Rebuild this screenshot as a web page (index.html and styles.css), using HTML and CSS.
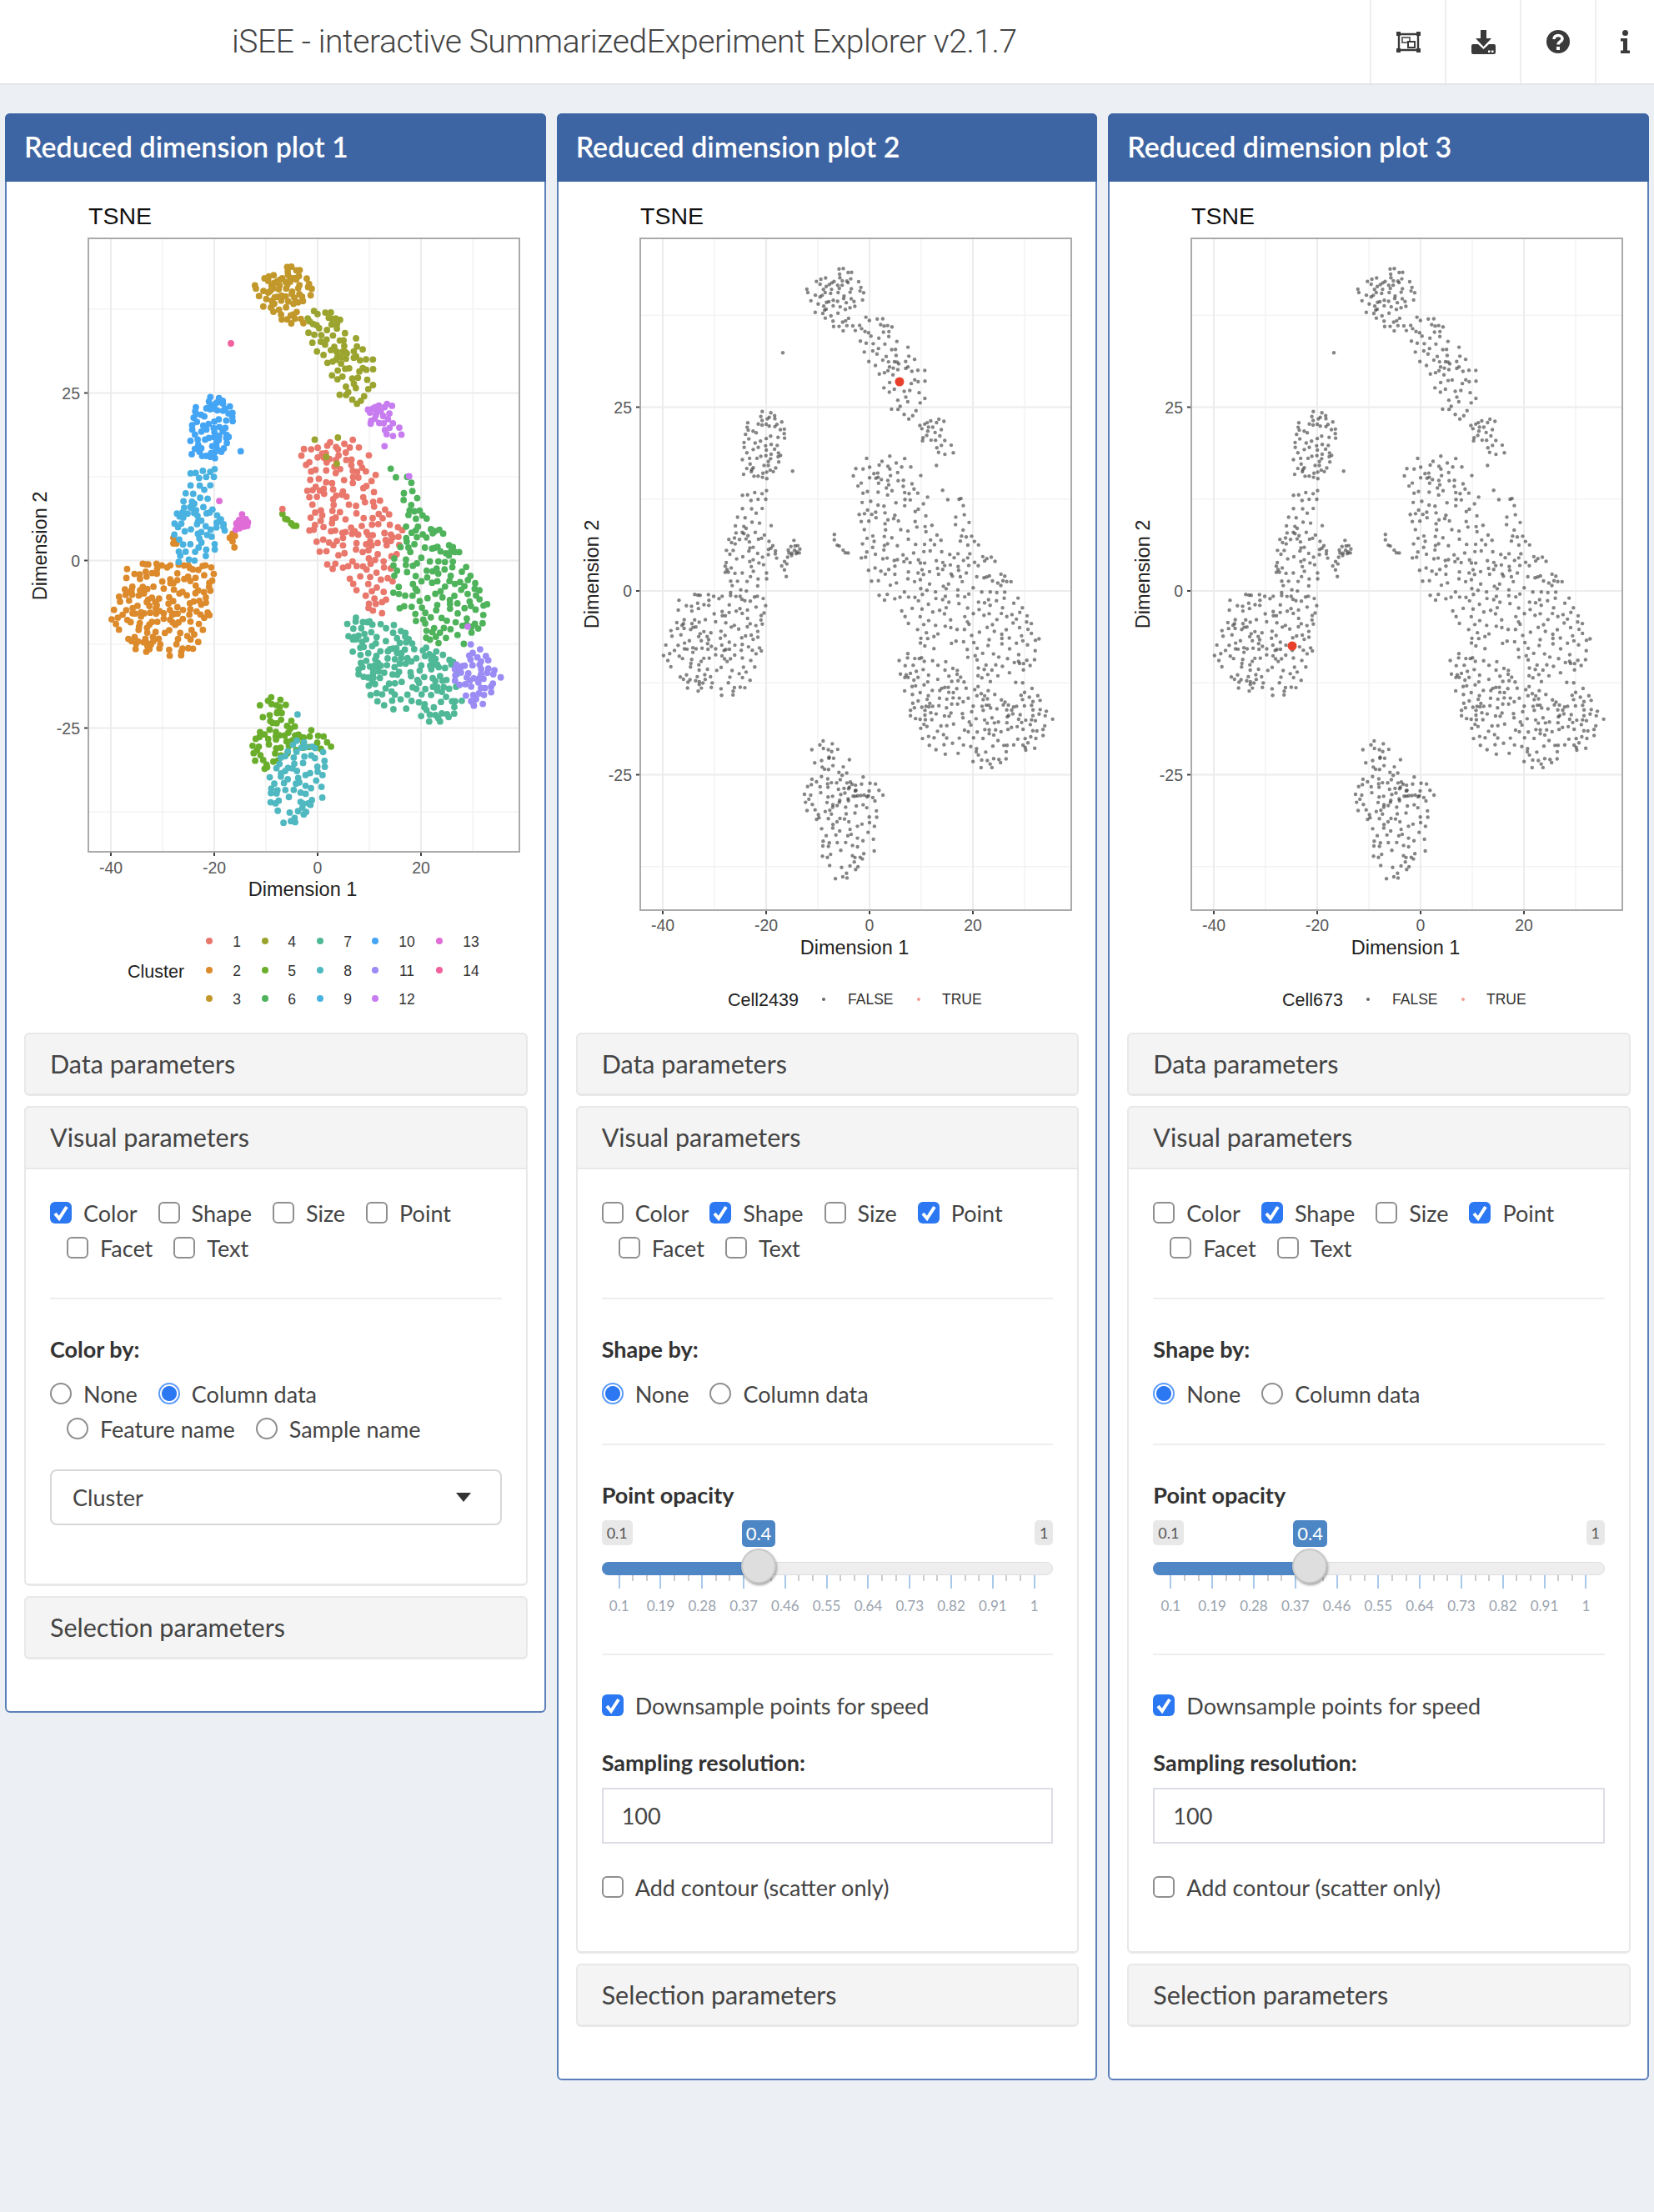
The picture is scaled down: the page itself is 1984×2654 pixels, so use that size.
FILE: index.html
```html
<!DOCTYPE html>
<html lang="en">
<head>
    <meta charset="UTF-8">
    <title>iSEE</title>
    <link rel="stylesheet" href="styles.css">
</head>
<body>
    <header class="topbar">
        <div class="app-title">iSEE - interactive SummarizedExperiment Explorer v2.1.7</div>
        <div class="top-cell">
            <svg class="ic-group" viewBox="0 0 29 25">
                <path fill="none" stroke="#3a3a3a" stroke-width="2.4" d="M3 3h23v19H3z"/>
                <path fill="#3a3a3a" d="M0 0h5v5H0zM24 0h5v5h-5zM0 20h5v5H0zM24 20h5v5h-5z"/>
                <path fill="#3a3a3a" fill-opacity=".75" d="M6 6h11v8H6z"/>
                <path fill="#fff" d="M8 8h7v4H8z"/>
                <path fill="#3a3a3a" d="M13 11h10v9H13z"/>
                <path fill="#fff" d="M15 13h6v5h-6z"/>
            </svg>
        </div>
        <div class="top-cell">
            <svg class="ic-download" viewBox="0 0 29 29">
                <path fill="#3a3a3a" d="M11 0h7v10h6l-9.500 10L5 10h6z"/>
                <path fill="#3a3a3a" d="M0 19a2 2 0 0 1 2-2h6l6.500 6 6.500-6h6a2 2 0 0 1 2 2v8a2 2 0 0 1-2 2H2a2 2 0 0 1-2-2z"/>
                <path fill="#fff" d="M20 24.500h2.500V27H20zM24 24.500h2.500V27H24z"/>
            </svg>
        </div>
        <div class="top-cell">
            <svg class="ic-help" viewBox="0 0 28 28">
                <circle cx="14" cy="14" r="14" fill="#3a3a3a"/>
                <path fill="none" stroke="#fff" stroke-width="3.600" d="M9 11c0-3 2.200-4.500 5-4.500s5 1.700 5 4c0 3.500-5 3.500-5 7"/>
                <path fill="#fff" d="M12 20h4v4h-4z"/>
            </svg>
        </div>
        <div class="top-cell top-cell-last">
            <svg class="ic-info" viewBox="0 0 11 28">
                <circle cx="5.500" cy="3.500" r="3.500" fill="#3a3a3a"/>
                <path fill="#3a3a3a" d="M0 10h8v14.500h3V28H0v-3.500h3v-11H0z"/>
            </svg>
        </div>
    </header>

    <main class="panels">
        <!-- plot 1 -->
        <section class="box">
            <div class="box-title">Reduced dimension plot 1</div>
            <div class="box-body">
                <svg class="plot" data-plot="1" viewBox="2 218 644 1021"></svg>
                <div class="coll">Data parameters</div>
                <div class="coll-open">
                    <div class="coll coll-head">Visual parameters</div>
                    <div class="coll-body">
                        <div class="opt-row">
                            <label class="opt"><input type="checkbox" checked>Color</label>
                            <label class="opt"><input type="checkbox">Shape</label>
                            <label class="opt"><input type="checkbox">Size</label>
                            <label class="opt"><input type="checkbox">Point</label>
                        </div>
                        <div class="opt-row opt-row-wrap">
                            <label class="opt"><input type="checkbox">Facet</label>
                            <label class="opt"><input type="checkbox">Text</label>
                        </div>
                        <hr class="sep">
                        <div class="field-label">Color by:</div>
                        <div class="opt-row">
                            <label class="opt"><input type="radio" name="c1">None</label>
                            <label class="opt"><input type="radio" name="c1" checked>Column data</label>
                        </div>
                        <div class="opt-row opt-row-wrap">
                            <label class="opt"><input type="radio" name="c1">Feature name</label>
                            <label class="opt"><input type="radio" name="c1">Sample name</label>
                        </div>
                        <div class="select-box">Cluster<span class="caret"></span></div>
                    </div>
                </div>
                <div class="coll">Selection parameters</div>
            </div>
        </section>

        <!-- plot 2 -->
        <section class="box">
            <div class="box-title">Reduced dimension plot 2</div>
            <div class="box-body">
                <svg class="plot" data-plot="2" viewBox="2 218 644 1021"></svg>
                <div class="coll">Data parameters</div>
                <div class="coll-open">
                    <div class="coll coll-head">Visual parameters</div>
                    <div class="coll-body coll-body-long">
                        <div class="opt-row">
                            <label class="opt"><input type="checkbox">Color</label>
                            <label class="opt"><input type="checkbox" checked>Shape</label>
                            <label class="opt"><input type="checkbox">Size</label>
                            <label class="opt"><input type="checkbox" checked>Point</label>
                        </div>
                        <div class="opt-row opt-row-wrap">
                            <label class="opt"><input type="checkbox">Facet</label>
                            <label class="opt"><input type="checkbox">Text</label>
                        </div>
                        <hr class="sep">
                        <div class="field-label">Shape by:</div>
                        <div class="opt-row">
                            <label class="opt"><input type="radio" name="s2" checked>None</label>
                            <label class="opt"><input type="radio" name="s2">Column data</label>
                        </div>
                        <hr class="sep sep-b">
                        <div class="field-label">Point opacity</div>
                        <div class="slider"></div>
                        <hr class="sep sep-c">
                        <div class="opt-row"><label class="opt"><input type="checkbox" checked>Downsample points for speed</label></div>
                        <div class="field-label field-label-res">Sampling resolution:</div>
                        <input class="num-input" type="text" value="100">
                        <div class="opt-row opt-row-last"><label class="opt"><input type="checkbox">Add contour (scatter only)</label></div>
                    </div>
                </div>
                <div class="coll">Selection parameters</div>
            </div>
        </section>

        <!-- plot 3 -->
        <section class="box">
            <div class="box-title">Reduced dimension plot 3</div>
            <div class="box-body">
                <svg class="plot" data-plot="3" viewBox="2 218 644 1021"></svg>
                <div class="coll">Data parameters</div>
                <div class="coll-open">
                    <div class="coll coll-head">Visual parameters</div>
                    <div class="coll-body coll-body-long">
                        <div class="opt-row">
                            <label class="opt"><input type="checkbox">Color</label>
                            <label class="opt"><input type="checkbox" checked>Shape</label>
                            <label class="opt"><input type="checkbox">Size</label>
                            <label class="opt"><input type="checkbox" checked>Point</label>
                        </div>
                        <div class="opt-row opt-row-wrap">
                            <label class="opt"><input type="checkbox">Facet</label>
                            <label class="opt"><input type="checkbox">Text</label>
                        </div>
                        <hr class="sep">
                        <div class="field-label">Shape by:</div>
                        <div class="opt-row">
                            <label class="opt"><input type="radio" name="s3" checked>None</label>
                            <label class="opt"><input type="radio" name="s3">Column data</label>
                        </div>
                        <hr class="sep sep-b">
                        <div class="field-label">Point opacity</div>
                        <div class="slider"></div>
                        <hr class="sep sep-c">
                        <div class="opt-row"><label class="opt"><input type="checkbox" checked>Downsample points for speed</label></div>
                        <div class="field-label field-label-res">Sampling resolution:</div>
                        <input class="num-input" type="text" value="100">
                        <div class="opt-row opt-row-last"><label class="opt"><input type="checkbox">Add contour (scatter only)</label></div>
                    </div>
                </div>
                <div class="coll">Selection parameters</div>
            </div>
        </section>
    </main>
    <script src="plots.js"></script>
</body>
</html>
```

FILE: styles.css
```css
* {
    box-sizing: border-box;
}
body {
    margin: 0;
    min-height: 2654px;
    background-color: #ecf0f5;
    font-family: Lato, "Noto Sans", sans-serif;
    color: #444;
}
.topbar {
    display: flex;
    height: 102px;
    background-color: #fff;
    border-bottom: 2px solid #e2e5ea;
}
.app-title {
    flex: 1;
    padding-left: 278px;
    font-family: Roboto, "Liberation Sans", sans-serif;
    font-weight: 300;
    font-size: 39px;
    letter-spacing: -.4px;
    line-height: 100px;
    color: #444;
}
.top-cell {
    display: flex;
    align-items: center;
    justify-content: center;
    width: 90px;
    border-left: 2px solid #eee;
}
.top-cell-last {
    width: 71px;
}
.ic-group {
    width: 29px;
    height: 25px;
}
.ic-download {
    width: 29px;
    height: 29px;
}
.ic-help {
    width: 28px;
    height: 28px;
}
.ic-info {
    width: 11px;
    height: 28px;
}
.panels {
    display: grid;
    grid-template-columns: repeat(3, minmax(0, 1fr));
    gap: 13px;
    align-items: start;
    padding: 34px 6px 0;
}
.box {
    background-color: #fff;
    border: 2px solid #5b7fb8;
    border-radius: 6px;
}
.box-title {
    height: 82px;
    margin: -2px -2px 0;
    padding-left: 23px;
    background-color: #3e65a3;
    border-radius: 6px 6px 0 0;
    color: #fff;
    font-size: 34px;
    font-weight: 600;
    line-height: 80px;
}
.box-body {
    padding: 0 20px 50px 21px;
}
.plot {
    display: block;
    width: 644px;
    height: 1021px;
    margin-left: -21px;
}
.plot text {
    font-family: "Liberation Sans", Arial, sans-serif;
}
.coll {
    height: 76px;
    margin-bottom: 12px;
    padding-left: 29px;
    background-color: #f4f4f4;
    border: 2px solid #e8e8e8;
    border-bottom-width: 3px;
    border-radius: 6px;
    font-size: 30.5px;
    line-height: 70px;
    color: #444;
}
.coll-open {
    margin-bottom: 12px;
    border: 2px solid #e8e8e8;
    border-bottom-width: 3px;
    border-radius: 6px;
}
.coll-head {
    margin: -2px -2px 0;
    border-radius: 6px 6px 0 0;
    border-bottom-width: 2px;
}
.coll-body {
    padding: 31px 29px 70px;
}
.coll-body-long {
    padding-bottom: 56px;
}
.opt-row {
    display: flex;
    gap: 25px;
    height: 42px;
}
.opt-row-wrap {
    padding-left: 20px;
}
.opt-row-last {
    margin-top: 31px;
}
.opt {
    display: flex;
    align-items: center;
    gap: 14px;
    font-size: 27px;
    color: #444;
}
.opt input {
    appearance: none;
    flex: none;
    width: 26px;
    height: 26px;
    margin: 0;
    background-color: #fff;
    border: 2px solid #8f8f8f;
}
.opt input[type="checkbox"] {
    border-radius: 6px;
}
.opt input[type="checkbox"]:checked {
    background: #2b78f2 url("data:image/svg+xml,%3Csvg xmlns='http://www.w3.org/2000/svg' viewBox='0 0 26 26'%3E%3Cpath fill='none' stroke='%23fff' stroke-width='4' d='M6 14l5 6 9-14'/%3E%3C/svg%3E") center / 100% no-repeat;
    border: none;
}
.opt input[type="radio"] {
    border-radius: 50%;
}
.opt input[type="radio"]:checked {
    background: radial-gradient(circle, #2b78f2 0 8.500px, #fff 9.500px);
    border-color: #5b9bf8;
}
.sep {
    height: 2px;
    margin: 39px 0 42px;
    background-color: #eee;
    border: none;
}
.sep-c {
    margin: 0 0 39px;
}
.field-label {
    height: 36px;
    margin-bottom: 14px;
    font-size: 27px;
    font-weight: 700;
    line-height: 36px;
    color: #333;
}
.field-label-res {
    margin: 30px 0 12px;
}
.select-box {
    position: relative;
    height: 67px;
    margin-top: 28px;
    padding-left: 25px;
    background-color: #fff;
    border: 2px solid #d8d8d8;
    border-radius: 8px;
    font-size: 27px;
    line-height: 64px;
    color: #444;
}
.caret {
    position: absolute;
    top: 26px;
    right: 35px;
    border-top: 11px solid #333;
    border-left: 9px solid transparent;
    border-right: 9px solid transparent;
}
.num-input {
    display: block;
    width: 100%;
    height: 67px;
    padding: 0 22px;
    background-color: #fff;
    border: 2px solid #dcdee6;
    font-family: inherit;
    font-size: 27px;
    color: #444;
}
.slider {
    position: relative;
    height: 160px;
    margin-top: -2px;
}
.slider-badge {
    position: absolute;
    top: 0;
    height: 30px;
    padding: 0 6px;
    background-color: #e8e8e8;
    border-radius: 5px;
    font-size: 18px;
    line-height: 30px;
    color: #555;
}
.slider-badge-on {
    top: 0;
    height: 32px;
    padding: 0 5px;
    background-color: #4c86c4;
    font-size: 22px;
    line-height: 32px;
    color: #fff;
}
.slider-track {
    position: absolute;
    top: 50px;
    left: 0;
    right: 0;
    height: 16px;
    background-color: #eee;
    border: 1px solid #ddd;
    border-radius: 8px;
}
.slider-fill {
    position: absolute;
    top: 50px;
    left: 0;
    height: 16px;
    background-color: #4f86c6;
    border-radius: 8px 0 0 8px;
}
.slider-handle {
    position: absolute;
    top: 34px;
    width: 42px;
    height: 42px;
    background-color: #dedede;
    border: 2px solid #c8c8c8;
    border-radius: 50%;
    box-shadow: 1px 2px 3px rgba(0, 0, 0, .35);
}
.tick {
    position: absolute;
    top: 66px;
    width: 2px;
    height: 16px;
    background-color: #a9c9ea;
}
.tick-minor {
    height: 7px;
    background-color: #ccc;
}
.tick-label {
    position: absolute;
    top: 93px;
    width: 60px;
    margin-left: -30px;
    text-align: center;
    font-size: 17px;
    line-height: 20px;
    color: #9aa3ae;
}
```

FILE: plots.js
```js
// seeded random so the three plots and every reload show the same cloud
var seed = 4242;
function rnd() {
    seed = (seed + 0x6D2B79F5) | 0;
    var t = Math.imul(seed ^ (seed >>> 15), 1 | seed);
    t = (t + Math.imul(t ^ (t >>> 7), 61 | t)) ^ t;
    return ((t ^ (t >>> 14)) >>> 0) / 4294967296;
}

var COLORS = {
    1: '#e9776c', 2: '#dc8a2b', 3: '#c2982b', 4: '#9aa42e', 5: '#6aae2c', 6: '#4fb35c', 7: '#4fb896',
    8: '#4fb8c0', 9: '#4ab2e0', 10: '#45a5f5', 11: '#9a8bf5', 12: '#c77df0', 13: '#e06cd8', 14: '#f2609e'
};

// cluster outlines traced off plot 1. "a" coords are page px, "b" coords are measured from
// a stretched crop, see toPage()
var CLUSTERS = [
    { c: 3, n: 72, a: [[304,340],[348,317],[375,333],[375,357],[357,367],[366,390],[353,393],[312,367]] },
    { c: 4, n: 78, a: [[366,377],[393,367],[451,430],[447,467],[429,487],[406,473],[393,437],[373,417]] },
    { c: 12, n: 26, a: [[432,491],[470,483],[482,522],[465,525],[440,505]] },
    { c: 1, n: 180, b: [[850,110],[990,60],[1060,120],[1085,250],[1120,350],[1150,385],[1150,440],[1115,480],[1135,580],[1090,670],[1030,650],[1030,600],[950,520],[910,470],[870,400],[880,300],[860,190]] },
    { c: 6, n: 150, b: [[1105,170],[1170,200],[1210,330],[1280,390],[1320,480],[1390,620],[1380,700],[1330,770],[1220,760],[1180,680],[1110,620],[1120,480],[1150,400],[1150,250]] },
    { c: 7, n: 165, b: [[985,700],[1020,670],[1130,700],[1200,770],[1300,810],[1310,890],[1330,960],[1290,1010],[1215,1040],[1180,980],[1090,985],[1030,900],[1000,780]] },
    { c: 11, n: 50, b: [[1335,750],[1370,780],[1430,870],[1390,960],[1350,995],[1320,930],[1280,860],[1310,810]] },
    { c: 2, n: 170, b: [[360,505],[420,490],[610,500],[610,560],[600,670],[560,770],[510,820],[460,790],[385,800],[340,730],[310,680],[335,610],[360,570]] },
    { c: 2, n: 4, b: [[490,405],[505,405],[505,435],[490,435]] },
    { c: 2, n: 5, b: [[652,385],[672,395],[672,445],[655,440]] },
    { c: 10, n: 70, b: [[610,-81],[670,-30],[655,80],[620,150],[550,150],[540,90],[545,20],[560,-50]] },
    { c: 9, n: 68, b: [[545,180],[620,170],[600,280],[620,360],[610,480],[540,490],[500,490],[495,350],[520,270]] },
    { c: 9, n: 6, b: [[610,330],[625,330],[655,385],[640,390]] },
    { c: 13, n: 14, b: [[690,325],[715,360],[680,390],[665,385],[675,350]] },
    { c: 5, n: 72, b: [[735,965],[785,930],[820,960],[830,1010],[855,1060],[890,1040],[960,1100],[940,1125],[885,1110],[810,1135],[760,1190],[720,1150],[715,1100],[750,1030]] },
    { c: 5, n: 6, b: [[790,325],[810,325],[850,370],[835,375]] },
    { c: 8, n: 72, b: [[850,1060],[900,1110],[955,1140],[935,1270],[890,1310],[850,1360],[810,1370],[770,1300],[765,1200],[810,1130]] }
];
var LONE = [
    { c: 14, a: [277, 412] }, { c: 10, b: [686, 116] }, { c: 13, b: [625, 283] }, { c: 4, b: [897, 77] },
    { c: 4, b: [930, 135] }, { c: 4, b: [960, 158] }, { c: 4, b: [963, 70] }, { c: 8, b: [848, 1000] },
    { c: 12, b: [1096, 99] }, { c: 12, b: [1166, 200] }, { c: 12, b: [1333, 705] }, { c: 1, b: [805, 310] }
];

function toPage(p) {
    return [p[0] / 2.376, 500 + p[1] / 2.8];
}
function inPoly(x, y, poly) {
    var inside = false;
    for (var i = 0, j = poly.length - 1; i < poly.length; j = i++) {
        var a = poly[i], b = poly[j];
        if ((a[1] > y) !== (b[1] > y) && x < (b[0] - a[0]) * (y - a[1]) / (b[1] - a[1]) + a[0]) inside = !inside;
    }
    return inside;
}
function toData(x, y) {
    return { x: (x - 381) / 6.2, y: (672.5 - y) / 8.04 };
}

var points = [];
CLUSTERS.forEach(function (cl) {
    var poly = cl.a || cl.b.map(toPage);
    var xs = poly.map(function (p) { return p[0]; });
    var ys = poly.map(function (p) { return p[1]; });
    var x0 = Math.min.apply(null, xs), x1 = Math.max.apply(null, xs);
    var y0 = Math.min.apply(null, ys), y1 = Math.max.apply(null, ys);
    var own = [];
    for (var i = 0; i < cl.n; i++) {
        var best = null, bestD = -1;
        // take the roomiest of a few candidates, the clouds are evenly spread
        for (var k = 0; k < 3; k++) {
            var x, y;
            do {
                x = x0 + rnd() * (x1 - x0);
                y = y0 + rnd() * (y1 - y0);
            } while (!inPoly(x, y, poly));
            var d = 1e9;
            own.forEach(function (o) { d = Math.min(d, (o[0] - x) * (o[0] - x) + (o[1] - y) * (o[1] - y)); });
            if (d > bestD) { bestD = d; best = [x, y]; }
        }
        own.push(best);
        var v = toData(best[0], best[1]);
        points.push({ x: v.x, y: v.y, c: cl.c });
    }
});
LONE.forEach(function (l) {
    var p = l.a || toPage(l.b);
    var v = toData(p[0], p[1]);
    points.push({ x: v.x, y: v.y, c: l.c });
});

function el(svg, name, attrs, text) {
    var e = document.createElementNS('http://www.w3.org/2000/svg', name);
    for (var a in attrs) e.setAttribute(a, attrs[a]);
    if (text !== undefined) e.textContent = text;
    svg.appendChild(e);
    return e;
}

function drawAxes(svg, o) {
    var X = function (v) { return 375 + 6.2 * v; };
    var Y = function (v) { return o.y0 - o.ys * v; };
    [-30, -10, 10, 30].forEach(function (v) {
        el(svg, 'line', { x1: X(v), x2: X(v), y1: 286, y2: o.bottom, stroke: '#f3f3f3', 'stroke-width': 1.5 });
    });
    [37.5, 12.5, -12.5, -37.5].forEach(function (v) {
        el(svg, 'line', { x1: 100, x2: 617, y1: Y(v), y2: Y(v), stroke: '#f3f3f3', 'stroke-width': 1.5 });
    });
    [-40, -20, 0, 20].forEach(function (v) {
        el(svg, 'line', { x1: X(v), x2: X(v), y1: 286, y2: o.bottom, stroke: '#ececec', 'stroke-width': 2 });
        el(svg, 'line', { x1: X(v), x2: X(v), y1: o.bottom, y2: o.bottom + 5, stroke: '#444', 'stroke-width': 2 });
        el(svg, 'text', { x: X(v), y: o.tickBase, 'text-anchor': 'middle', 'font-size': 19.5, fill: '#5a5a5a' }, v);
    });
    [25, 0, -25].forEach(function (v) {
        el(svg, 'line', { x1: 100, x2: 617, y1: Y(v), y2: Y(v), stroke: '#ececec', 'stroke-width': 2 });
        el(svg, 'line', { x1: 95, x2: 100, y1: Y(v), y2: Y(v), stroke: '#444', 'stroke-width': 2 });
        el(svg, 'text', { x: 90, y: Y(v) + 7, 'text-anchor': 'end', 'font-size': 19.5, fill: '#5a5a5a' }, v);
    });
    el(svg, 'text', { x: 100, y: 269, 'font-size': 28.5, fill: '#111' }, 'TSNE');
    el(svg, 'text', { x: 357, y: o.bottom + 53, 'text-anchor': 'middle', 'font-size': 23.5, fill: '#222' }, 'Dimension 1');
    el(svg, 'text', {
        x: 0, y: 0, 'text-anchor': 'middle', 'font-size': 23.5, fill: '#222',
        transform: 'translate(50 ' + o.titleY + ') rotate(-90)'
    }, 'Dimension 2');
    return { X: X, Y: Y };
}

function frame(svg, bottom) {
    el(svg, 'rect', { x: 100, y: 286, width: 517, height: bottom - 286, fill: 'none', stroke: '#aaa', 'stroke-width': 2 });
}

function drawColored(svg) {
    var ax = drawAxes(svg, { y0: 672.5, ys: 8.04, bottom: 1022, tickBase: 1048, titleY: 655 });
    points.forEach(function (p) {
        el(svg, 'circle', { cx: ax.X(p.x), cy: ax.Y(p.y), r: 3.9, fill: COLORS[p.c] });
    });
    frame(svg, 1022);
    el(svg, 'text', { x: 147, y: 1173, 'font-size': 21.5, fill: '#222' }, 'Cluster');
    var cols = [245, 312, 378, 444, 521], labs = [278, 344, 411, 482, 559], rows = [1130, 1165, 1199];
    for (var i = 1; i <= 14; i++) {
        var col = Math.floor((i - 1) / 3), row = (i - 1) % 3;
        el(svg, 'circle', { cx: cols[col], cy: rows[row] - 1, r: 4, fill: COLORS[i] });
        el(svg, 'text', { x: labs[col], y: rows[row] + 6, 'text-anchor': 'middle', 'font-size': 17.5, fill: '#333' }, i);
    }
}

function drawGrey(svg, o) {
    var ax = drawAxes(svg, { y0: 709, ys: 8.82, bottom: 1092, tickBase: 1117, titleY: 689 });
    points.forEach(function (p) {
        el(svg, 'circle', { cx: ax.X(p.x), cy: ax.Y(p.y), r: 2.2, fill: '#333', 'fill-opacity': .6 });
    });
    el(svg, 'circle', { cx: o.red[0], cy: o.red[1], r: 5.5, fill: '#e8402a' });
    frame(svg, 1092);
    el(svg, 'text', { x: o.cell, y: 1207, 'font-size': 21.5, fill: '#222' }, o.name);
    el(svg, 'circle', { cx: o.dot, cy: 1199, r: 2, fill: '#666' });
    el(svg, 'text', { x: o.dot + 29, y: 1205, 'font-size': 17.5, fill: '#333' }, 'FALSE');
    el(svg, 'circle', { cx: o.dot + 114, cy: 1199, r: 2, fill: '#f29a94' });
    el(svg, 'text', { x: o.dot + 142, y: 1205, 'font-size': 17.5, fill: '#333' }, 'TRUE');
}

drawColored(document.querySelector('[data-plot="1"]'));
drawGrey(document.querySelector('[data-plot="2"]'), { red: [411, 458], name: 'Cell2439', cell: 205, dot: 320 });
drawGrey(document.querySelector('[data-plot="3"]'), { red: [221, 775], name: 'Cell673', cell: 209, dot: 312 });

// opacity slider: 11 labelled ticks with two small ones between each pair
document.querySelectorAll('.slider').forEach(function (s) {
    var html = '<div class="slider-track"></div><div class="slider-fill" style="width:176px"></div>';
    var labels = ['0.1', '0.19', '0.28', '0.37', '0.46', '0.55', '0.64', '0.73', '0.82', '0.91', '1'];
    labels.forEach(function (txt, i) {
        var x = 21 + 49.8 * i;
        html += '<div class="tick" style="left:' + (x - 1) + 'px"></div>';
        html += '<div class="tick-label" style="left:' + x + 'px">' + txt + '</div>';
        if (i < 10) {
            html += '<div class="tick tick-minor" style="left:' + (x + 16.6 - 1) + 'px"></div>';
            html += '<div class="tick tick-minor" style="left:' + (x + 33.2 - 1) + 'px"></div>';
        }
    });
    html += '<div class="slider-badge" style="left:0">0.1</div>';
    html += '<div class="slider-badge slider-badge-on" style="left:168px">0.4</div>';
    html += '<div class="slider-badge" style="right:0">1</div>';
    html += '<div class="slider-handle" style="left:167px"></div>';
    s.innerHTML = html;
});
```
